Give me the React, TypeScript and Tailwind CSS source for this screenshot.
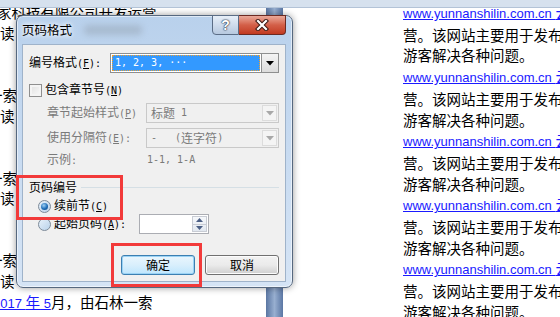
import React from 'react';

const groups = [0, 1, 2, 3, 4, 5];

// half-width latin, SimSun style (6px per char)
function M({ children }: { children: React.ReactNode }) {
    return <span className="whitespace-pre font-['DejaVu_Sans_Mono',monospace] text-[10px]">{children}</span>;
}

function Key({ k }: { k: string }) {
    return (
        <M>
            (<span className="underline">{k}</span>)
        </M>
    );
}

function DocLeft() {
    return (
        <div className="w-[266px] shrink-0 overflow-hidden whitespace-nowrap text-[14.5px] leading-[20.7px] text-black">
            <div className="-ml-[3px]">家科技有限公司开发运营</div>
            <div>读</div>
            <div>&nbsp;</div>
            <div>&nbsp;</div>
            <div className="-ml-[12px]">一索道有限公司经营</div>
            <div>读</div>
            <div>&nbsp;</div>
            <div>&nbsp;</div>
            <div className="-ml-[12px]">一索道有限公司经营</div>
            <div>读</div>
            <div>&nbsp;</div>
            <div>&nbsp;</div>
            <div className="-ml-[12px]">一索道有限公司经营</div>
            <div>读</div>
            <div className="-ml-[7px]">
                <span className="text-[#1a1aff] underline">
                    <span className="font-['Liberation_Sans',sans-serif] text-[13px]">2017 </span>年<span className="font-['Liberation_Sans',sans-serif] text-[13px]"> 5</span>
                </span>
                月，由石林一索
            </div>
            <div>运营，公司进入大旅游行业</div>
        </div>
    );
}

function DocRight() {
    return (
        <div className="flex-1 overflow-hidden whitespace-nowrap pl-[120px] text-[14.5px] leading-[20.7px] text-black">
            {groups.map(i => (
                <div key={i}>
                    <div className="text-[#1a1aff] underline">
                        <span className="font-['Liberation_Sans',sans-serif] text-[13px]">www.yunnanshilin.com.cn </span>云南石林
                    </div>
                    <div>营。该网站主要用于发布石林景区信息</div>
                    <div>游客解决各种问题。</div>
                </div>
            ))}
        </div>
    );
}

function Arrow({ color }: { color: string }) {
    return (
        <svg width="8" height="5" viewBox="0 0 8 5">
            <path d="M0 0h8L4 4.5z" fill={color} />
        </svg>
    );
}

function Combo({ children, disabled }: { children: React.ReactNode; disabled?: boolean }) {
    if (!disabled) {
        return (
            <div className="flex h-[20px] flex-1 border border-[#8e8f8f] bg-white">
                <div className="m-[1px] flex flex-1 items-center border border-dotted border-[#f0a030] bg-[#3399ff] pl-[2px] text-white">
                    {children}
                </div>
                <div className="flex w-[17px] items-center justify-center border-l border-[#8e8f8f] bg-gradient-to-b from-[#f4f4f4] to-[#dcdcdc]">
                    <Arrow color="#000" />
                </div>
            </div>
        );
    }
    return (
        <div className="flex h-[20px] w-[133px] border border-[#c9c9c9] bg-[#f0f0f0]">
            <div className="flex flex-1 items-center pl-[4px] text-[#7a7a7a]">{children}</div>
            <div className="m-[1px] flex w-[15px] items-center justify-center border border-[#dcdcdc] bg-[#f4f4f4]">
                <Arrow color="#a8a8a8" />
            </div>
        </div>
    );
}

function Radio({ checked }: { checked?: boolean }) {
    return (
        <div className="flex h-[13px] w-[13px] shrink-0 items-center justify-center rounded-full border border-[#7d8a99] bg-gradient-to-br from-[#e8f1fa] to-[#b9d2ea]">
            {checked && (
                <div className="h-[7px] w-[7px] rounded-full bg-[radial-gradient(circle_at_40%_35%,#9fd0f5,#1d6db8_55%,#0d3e78)]" />
            )}
        </div>
    );
}

function Button({ label, primary }: { label: string; primary?: boolean }) {
    return (
        <div
            className={
                primary
                    ? 'flex h-[20px] w-[74px] items-center justify-center rounded-[3px] border border-[#3c7fb1] bg-gradient-to-b from-[#eaf6fd] via-[#d9effc] to-[#bee6fd] text-black shadow-[inset_0_0_0_1px_#9bd3f5]'
                    : 'flex h-[20px] w-[74px] items-center justify-center rounded-[3px] border border-[#707070] bg-gradient-to-b from-[#f2f2f2] via-[#ebebeb] to-[#cfcfcf] text-black shadow-[inset_0_0_0_1px_#fcfcfc]'
            }
        >
            {label}
        </div>
    );
}

function Dialog() {
    return (
        <div className="absolute left-[16px] top-[15px] flex h-[273px] w-[277px] flex-col rounded-[7px] border border-[#56687f] bg-gradient-to-b from-[#b9d1ec] via-[#c8dbf1] to-[#d5e4f5] shadow-[0_0_7px_rgba(0,0,0,0.4),inset_0_0_0_1px_rgba(255,255,255,0.55)]">
            <div className="relative flex h-[28px] shrink-0 items-center pl-[5px]">
                <span className="relative z-10 text-[12.5px] text-black [text-shadow:0_0_6px_#fff,0_0_4px_#fff]">页码格式</span>
                <div className="ml-[12px] h-[10px] w-[58px] rounded bg-[#8c98a6]/40 blur-[3px]" />
                <div className="absolute right-[6px] top-[-1px] flex">
                    <div className="flex h-[20px] w-[27px] items-center justify-center rounded-bl-[4px] border border-[#5b6d86] bg-gradient-to-b from-[#e7eff8] via-[#cfdced] to-[#b7c9df] font-['Liberation_Sans',sans-serif] text-[14px] font-bold text-white [text-shadow:0_0_1px_#2c3a4f,0_0_1px_#2c3a4f,0_0_2px_#2c3a4f]">
                        ?
                    </div>
                    <div className="flex h-[20px] w-[47px] items-center justify-center rounded-br-[4px] border border-l-0 border-[#6b2a22] bg-gradient-to-b from-[#e9a99a] via-[#d35f48] to-[#c23a20]">
                        <svg width="14" height="12" viewBox="0 0 14 12">
                            <path d="M3 2l8 8M11 2l-8 8" stroke="#3a1712" strokeWidth="4.2" strokeLinecap="square" />
                            <path d="M3 2l8 8M11 2l-8 8" stroke="#fff" strokeWidth="2.2" strokeLinecap="square" />
                        </svg>
                    </div>
                </div>
            </div>
            <div className="mb-[5px] ml-[5px] mr-[6px] flex flex-1 flex-col border border-[#9fb3ca] bg-[#f0f0f0] px-[6px] text-[12px] leading-[14px] text-black">
                <div className="mt-[8px] flex h-[20px] items-center">
                    <span className="w-[81px] shrink-0">
                        编号格式<Key k="F" />
                        <M>:</M>
                    </span>
                    <Combo>
                        <M>1, 2, 3, ···</M>
                    </Combo>
                </div>
                <div className="mt-[10px] flex h-[14px] items-center">
                    <div className="h-[13px] w-[13px] border border-[#8f8f8f] bg-gradient-to-br from-[#e0e0e0] to-[#fafafa] shadow-[inset_0_0_0_2px_#f4f4f4]" />
                    <span className="ml-[3px]">
                        包含章节号<Key k="N" />
                    </span>
                </div>
                <div className="mt-[6px] flex h-[20px] items-center pl-[18px] text-[#7a7a7a]">
                    <span className="w-[99px] shrink-0">
                        章节起始样式<Key k="P" />
                    </span>
                    <Combo disabled>
                        标题<M> 1</M>
                    </Combo>
                </div>
                <div className="mt-[5px] flex h-[20px] items-center pl-[18px] text-[#7a7a7a]">
                    <span className="w-[99px] shrink-0">
                        使用分隔符<Key k="E" />
                        <M>:</M>
                    </span>
                    <Combo disabled>
                        <M>-   (</M>连字符<M>)</M>
                    </Combo>
                </div>
                <div className="mt-[5px] flex h-[14px] items-center pl-[18px] text-[#7a7a7a]">
                    <span className="w-[100px] shrink-0">
                        示例<M>:</M>
                    </span>
                    <M>1-1, 1-A</M>
                </div>
                <div className="mt-[13px] flex h-[14px] items-center">
                    <span>页码编号</span>
                    <div className="ml-[4px] h-px flex-1 bg-[#d5dfe5]" />
                </div>
                <div className="mt-[5px] flex h-[14px] items-center pl-[9px]">
                    <Radio checked />
                    <span className="ml-[3px]">
                        续前节<Key k="C" />
                    </span>
                </div>
                <div className="mt-px flex h-[20px] items-center pl-[9px]">
                    <Radio />
                    <span className="ml-[3px] w-[85px] shrink-0">
                        起始页码<Key k="A" />
                        <M>:</M>
                    </span>
                    <div className="flex h-[20px] w-[70px] border border-[#abadb3] bg-white">
                        <div className="flex-1" />
                        <div className="m-[1px] flex w-[15px] flex-col border border-[#c8ccd4] bg-gradient-to-b from-[#f6f8fb] to-[#e2e8f0]">
                            <div className="flex flex-1 items-center justify-center border-b border-[#c8ccd4]">
                                <svg width="7" height="4" viewBox="0 0 7 4"><path d="M0 4h7L3.5 0z" fill="#4b5f85" /></svg>
                            </div>
                            <div className="flex flex-1 items-center justify-center">
                                <svg width="7" height="4" viewBox="0 0 7 4"><path d="M0 0h7L3.5 4z" fill="#4b5f85" /></svg>
                            </div>
                        </div>
                    </div>
                </div>
                <div className="mt-[21px] flex justify-end gap-[10px]">
                    <Button label="确定" primary />
                    <Button label="取消" />
                </div>
            </div>
        </div>
    );
}

export default function App() {
    return (
        <div className="relative h-[317px] w-[560px] overflow-hidden bg-white font-['Noto_Sans_CJK_SC','Noto_Sans',sans-serif]">
            <div className="relative z-10 h-[8px] border-b border-[#b3c3d7] bg-[#d6e1ee]" />
            <div className="-mt-[6px] flex h-[315px]">
                <DocLeft />
                <div className="w-[17px] shrink-0 bg-gradient-to-r from-[#5a76a2] via-[#98afd0] to-[#5b77a4]" />
                <DocRight />
            </div>
            <Dialog />
            <div className="absolute left-[16px] top-[175px] h-[45px] w-[107px] border-[3px] border-[#f23a3a]" />
            <div className="absolute left-[111px] top-[243px] h-[44px] w-[91px] border-[3px] border-[#f23a3a]" />
        </div>
    );
}
